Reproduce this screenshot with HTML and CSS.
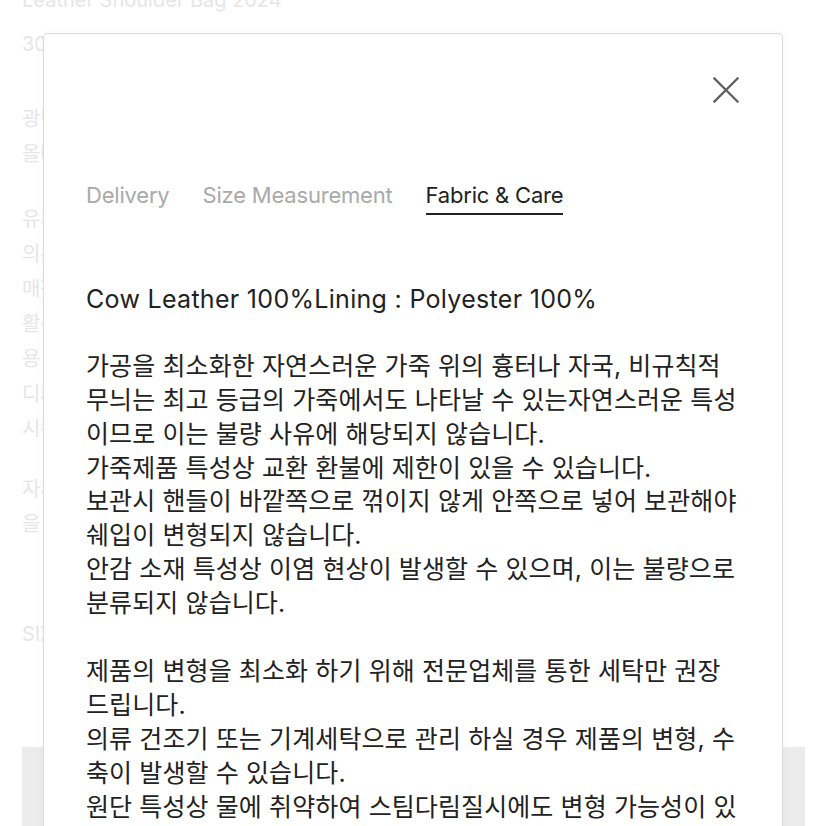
FILE: index.html
```html
<!DOCTYPE html>
<html lang="ko">
<head>
<meta charset="utf-8">
<title>Fabric &amp; Care</title>
<link rel="stylesheet" href="styles.css">
</head>
<body>
<div class="page">
  <div class="page-title">Leather Shoulder Bag 2024</div>
  <div class="page-line size">30 x 22 x 9 cm 가죽 숄더백 상세 정보</div>
  <div class="page-block first">
    <div class="page-line">광택이 있는 천연 가죽으로 제작되어 시간이 지날수록 자연스럽게 멋스러워집니다</div>
    <div class="page-line">올바른 보관 방법으로 오랫동안 사용하실 수 있습니다 제품 상세 정보를 확인해 주세요</div>
  </div>
  <div class="page-block second">
    <div class="page-line">유의사항 제품 사진은 모니터 환경에 따라 실제 색상과 다소 차이가 있을 수 있으며 관련</div>
    <div class="page-line">의류 및 잡화 제품의 특성상 착용 흔적이 있는 경우 교환 및 반품이 불가하오니 착용 전에는</div>
    <div class="page-line">매장 및 온라인 구매 시 영수증을 반드시 보관해 주시기 바랍니다 교환 및 환불 접수 시에 서</div>
    <div class="page-line">활용하시는 방법에 따라 제품 수명이 달라질 수 있으니 주의하시기 바랍니다 제품 사용 시 사</div>
    <div class="page-line">용 후에는 통풍이 잘 되는 그늘에서 건조하신 후 보관하시는 것을 권장드립니다 직사광선 비</div>
    <div class="page-line">디자인 및 소재의 특성상 미세한 차이가 발생할 수 있으며 이는 불량이 아닙니다 제품 특성 상</div>
    <div class="page-line">시즌에 따라 일부 구성이 변경될 수 있습니다</div>
  </div>
  <div class="page-block third">
    <div class="page-line">자세한 사항은 고객센터로 문의해 주시기 바랍니다 평일 오전 10시부터 오후 6시까지 운영 렴</div>
    <div class="page-line">을 참고해 주세요</div>
  </div>
  <div class="page-block fourth">
    <div class="page-line">SIZE GUIDE</div>
  </div>
  <div class="page-footer"></div>
</div>

<div class="modal" role="dialog" aria-label="Fabric &amp; Care">
  <button class="close" aria-label="닫기">
    <svg width="26" height="26" viewBox="0 0 26 26" aria-hidden="true">
      <path d="M1.5 1.5 L24.5 24.5 M24.5 1.5 L1.5 24.5" stroke="#606060" stroke-width="2.3" fill="none" stroke-linecap="square"/>
    </svg>
  </button>
  <nav class="tabs">
    <span class="tab">Delivery</span>
    <span class="tab">Size Measurement</span>
    <span class="tab active">Fabric &amp; Care</span>
  </nav>
  <div class="content">
    <p class="spec">Cow Leather 100%Lining : Polyester 100%</p>
    <p>가공을 최소화한 자연스러운 가죽 위의 흉터나 자국, 비규칙적<br>무늬는 최고 등급의 가죽에서도 나타날 수 있는자연스러운 특성<br>이므로 이는 불량 사유에 해당되지 않습니다.<br>가죽제품 특성상 교환 환불에 제한이 있을 수 있습니다.<br>보관시 핸들이 바깥쪽으로 꺾이지 않게 안쪽으로 넣어 보관해야<br>쉐입이 변형되지 않습니다.<br>안감 소재 특성상 이염 현상이 발생할 수 있으며, 이는 불량으로<br>분류되지 않습니다.</p>
    <p>제품의 변형을 최소화 하기 위해 전문업체를 통한 세탁만 권장<br>드립니다.<br>의류 건조기 또는 기계세탁으로 관리 하실 경우 제품의 변형, 수<br>축이 발생할 수 있습니다.<br>원단 특성상 물에 취약하여 스팀다림질시에도 변형 가능성이 있<br>습니다.</p>
  </div>
</div>
</body>
</html>
```

FILE: styles.css
```css
html, body {
  margin: 0;
  padding: 0;
}

body {
  width: 826px;
  height: 826px;
  overflow: hidden;
  position: relative;
  background: #ffffff;
  font-family: Inter, "Noto Sans CJK KR", "Noto Sans", sans-serif;
}

.page {
  padding: 0 21px 0 22px;
  color: #e6e6e6;
  font-size: 20px;
  line-height: 35px;
}

.page-title {
  margin-top: -17px;
  white-space: nowrap;
}

.page-line {
  white-space: nowrap;
  overflow: hidden;
}

.page-line.size {
  margin-top: 9px;
}

.page-block.first {
  margin-top: 40px;
}

.page-block.second {
  margin-top: 30px;
}

.page-block.third {
  margin-top: 25px;
}

.page-block.fourth {
  margin-top: 75px;
}

.page-footer {
  margin-top: 95px;
  height: 120px;
  background: #ececec;
}

.modal {
  position: absolute;
  left: 43px;
  top: 33px;
  width: 740px;
  height: 840px;
  background: #ffffff;
  border: 1.5px solid #dadada;
  border-radius: 5px;
  box-shadow: 0 0 8px rgba(0, 0, 0, 0.04);
  padding-left: 42px;
  box-sizing: border-box;
}

.close {
  position: absolute;
  top: 43px;
  right: 43px;
  width: 26px;
  height: 26px;
  padding: 0;
  border: 0;
  background: none;
  display: flex;
}

.tabs {
  display: flex;
  gap: 33px;
  margin-top: 146px;
  font-size: 22px;
  letter-spacing: -0.2px;
  line-height: 30px;
}

.tab {
  color: #a9a9a9;
  padding-bottom: 3px;
}

.tab.active {
  color: #222222;
  border-bottom: 2.5px solid #222222;
}

.content {
  margin-top: 68px;
  color: #222222;
  font-size: 25px;
  line-height: 33.9px;
  letter-spacing: 0.1px;
  white-space: nowrap;
}

.content p {
  margin: 0 0 33.9px 0;
}

.content .spec {
  letter-spacing: 0.3px;
  margin: 1px 0 32.9px 0;
}
```
